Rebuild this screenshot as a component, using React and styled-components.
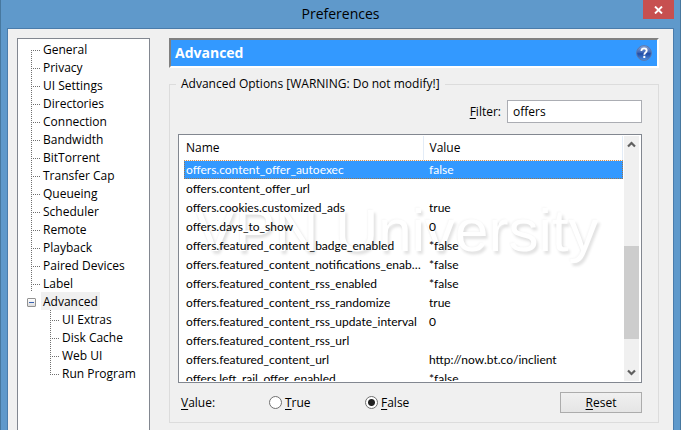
import React, { useState } from "react";
import styled, { createGlobalStyle } from "styled-components";

const sections = [
  "General",
  "Privacy",
  "UI Settings",
  "Directories",
  "Connection",
  "Bandwidth",
  "BitTorrent",
  "Transfer Cap",
  "Queueing",
  "Scheduler",
  "Remote",
  "Playback",
  "Paired Devices",
  "Label",
];

const advancedSections = ["UI Extras", "Disk Cache", "Web UI", "Run Program"];

const options = [
  { name: "offers.content_offer_autoexec", value: "false" },
  { name: "offers.content_offer_url", value: "" },
  { name: "offers.cookies.customized_ads", value: "true" },
  { name: "offers.days_to_show", value: "0" },
  { name: "offers.featured_content_badge_enabled", value: "*false" },
  { name: "offers.featured_content_notifications_enabled", value: "*false" },
  { name: "offers.featured_content_rss_enabled", value: "*false" },
  { name: "offers.featured_content_rss_randomize", value: "true" },
  { name: "offers.featured_content_rss_update_interval", value: "0" },
  { name: "offers.featured_content_rss_url", value: "" },
  { name: "offers.featured_content_url", value: "http://now.bt.co/inclient" },
  { name: "offers.left_rail_offer_enabled", value: "*false" },
];

const HelpIcon = () => (
  <svg width="16" height="16" viewBox="0 0 16 16" aria-hidden="true">
    <defs>
      <linearGradient id="helpFill" x1="0" y1="0" x2="0" y2="1">
        <stop offset="0" stopColor="#8fa9d8" />
        <stop offset="0.45" stopColor="#4068b8" />
        <stop offset="0.55" stopColor="#1f4ba6" />
        <stop offset="1" stopColor="#4f8fe0" />
      </linearGradient>
    </defs>
    <circle cx="8" cy="8" r="7.4" fill="url(#helpFill)" stroke="#5b78ad" />
    <path
      d="M5.4 6C5.4 4.2 6.5 3.3 8.1 3.3s2.6 1 2.6 2.4c0 1.8-2.4 1.9-2.4 4"
      fill="none"
      stroke="#fff"
      strokeWidth="1.8"
    />
    <rect x="7.3" y="10.8" width="2" height="2.2" fill="#fff" />
  </svg>
);

const Chevron = ({ down }) => (
  <svg width="9" height="7" viewBox="0 0 9 7" aria-hidden="true">
    <path
      d={down ? "M1 1.5l3.5 3.5L8 1.5" : "M1 5.5L4.5 2 8 5.5"}
      fill="none"
      stroke="#606060"
      strokeWidth="2.2"
    />
  </svg>
);

const App = () => {
  const [section, setSection] = useState("Advanced");
  const [filter, setFilter] = useState("offers");
  const [selected, setSelected] = useState(0);
  const [value, setValue] = useState("false");

  const renderItem = (label, first, last) => (
    <TreeRow key={label} role="treeitem" aria-selected={section === label}>
      <Branch $first={first} $last={last} />
      <TreeLabel $active={section === label} onClick={() => setSection(label)}>
        {label}
      </TreeLabel>
    </TreeRow>
  );

  return (
    <>
      <GlobalStyle />
      <Window>
        <TitleBar>
          <Title>Preferences</Title>
          <CloseButton type="button" aria-label="Close">
            <svg width="9" height="8" viewBox="0 0 9 8" aria-hidden="true">
              <path
                d="M1 0.5l7 7M8 0.5l-7 7"
                stroke="#fff"
                strokeWidth="1.9"
              />
            </svg>
          </CloseButton>
        </TitleBar>
        <Body>
          <Tree role="tree" aria-label="Sections">
            {sections.map((label, i) => renderItem(label, i === 0))}
            <TreeRow role="treeitem" aria-expanded="true">
              <Toggle type="button" aria-label="Collapse Advanced" />
              <TreeLabel
                $active={section === "Advanced"}
                onClick={() => setSection("Advanced")}
              >
                Advanced
              </TreeLabel>
            </TreeRow>
            <SubTree role="group">
              {advancedSections.map((label, i) =>
                renderItem(label, false, i === advancedSections.length - 1)
              )}
            </SubTree>
          </Tree>

          <Page>
            <Banner>
              <h1>Advanced</h1>
              <HelpButton type="button" aria-label="Help">
                <HelpIcon />
              </HelpButton>
            </Banner>

            <Group>
              <legend>Advanced Options [WARNING: Do not modify!]</legend>
              <GroupBody>
                <FilterRow>
                  <label htmlFor="filter">
                    <u>F</u>ilter:
                  </label>
                  <FilterInput
                    id="filter"
                    type="text"
                    value={filter}
                    onChange={(e) => setFilter(e.target.value)}
                  />
                </FilterRow>

                <ListBox>
                  <Watermark>VPN University</Watermark>
                  <ListView>
                    <Table>
                      <colgroup>
                        <col className="name" />
                        <col />
                      </colgroup>
                      <thead>
                        <tr>
                          <th>Name</th>
                          <th>Value</th>
                        </tr>
                      </thead>
                      <tbody>
                        {options.map((option, i) => (
                          <OptionRow
                            key={option.name}
                            $selected={selected === i}
                            onClick={() => setSelected(i)}
                          >
                            <td>{option.name}</td>
                            <td>{option.value}</td>
                          </OptionRow>
                        ))}
                      </tbody>
                    </Table>
                  </ListView>
                  <ScrollBar>
                    <ScrollButton type="button" aria-label="Scroll up">
                      <Chevron />
                    </ScrollButton>
                    <Track>
                      <Thumb />
                    </Track>
                    <ScrollButton type="button" aria-label="Scroll down">
                      <Chevron down />
                    </ScrollButton>
                  </ScrollBar>
                </ListBox>

                <ValueRow>
                  <ValueLabel>
                    <u>V</u>alue:
                  </ValueLabel>
                  <RadioLabel>
                    <Radio
                      name="value"
                      checked={value === "true"}
                      onChange={() => setValue("true")}
                    />
                    <span>
                      <u>T</u>rue
                    </span>
                  </RadioLabel>
                  <RadioLabel>
                    <Radio
                      name="value"
                      checked={value === "false"}
                      onChange={() => setValue("false")}
                    />
                    <span>
                      <u>F</u>alse
                    </span>
                  </RadioLabel>
                  <ResetButton type="button">
                    <u>R</u>eset
                  </ResetButton>
                </ValueRow>
              </GroupBody>
            </Group>
          </Page>
        </Body>
      </Window>
    </>
  );
};

export default App;

const GlobalStyle = createGlobalStyle`
  * {
    box-sizing: border-box;
  }

  body {
    margin: 0;
    color: #000;
    font-family: "Open Sans", "Noto Sans", sans-serif;
    font-size: 12px;
    line-height: 18px;
  }

  button,
  input {
    margin: 0;
    padding: 0;
    color: inherit;
    font: inherit;
  }

  u {
    text-underline-offset: 2px;
  }
`;

const Window = styled.div`
  display: flex;
  flex-direction: column;
  height: 100vh;
  padding: 0 6px;
  background-color: #5f99cb;
  border-left: 1px solid #47789f;
  border-right: 1px solid #47789f;
`;

const TitleBar = styled.div`
  display: grid;
  grid-template-columns: 1fr auto 1fr;
  flex: none;
  height: 28px;
`;

const Title = styled.div`
  grid-column: 2;
  font-size: 14px;
  line-height: 28px;
`;

const CloseButton = styled.button`
  display: flex;
  justify-content: center;
  align-items: center;
  justify-self: end;
  width: 31px;
  height: 19px;
  background-color: #c75050;
  border: none;
`;

const Body = styled.div`
  display: flex;
  flex: 1;
  gap: 19px;
  min-height: 0;
  padding: 9px 14px 0 9px;
  background-color: #f0f0f0;
  border: 1px solid #4a7cab;
  border-bottom: none;
`;

const Tree = styled.ul`
  flex: none;
  width: 133px;
  margin: 0;
  padding: 1px 0 0 13px;
  list-style: none;
  background-color: #fff;
  border: 1px solid #828790;
  border-bottom: none;
`;

const SubTree = styled.ul`
  margin: 0;
  padding: 0 0 0 19px;
  list-style: none;
`;

const TreeRow = styled.li`
  display: flex;
  height: 18px;
`;

/* dotted connector: a vertical rail plus a stub towards the label */
const Branch = styled.span`
  flex: none;
  width: 10px;
  background-image: repeating-linear-gradient(
      to bottom,
      #707070 0 1px,
      transparent 1px 2px
    ),
    repeating-linear-gradient(to right, #707070 0 1px, transparent 1px 2px);
  background-size: 1px ${(p) => (p.$first ? "8px" : p.$last ? "10px" : "18px")},
    9px 1px;
  background-position: 0 ${(p) => (p.$first ? "10px" : "0")}, 0 10px;
  background-repeat: no-repeat;
`;

const TreeLabel = styled.span`
  height: 18px;
  padding: 0 2px;
  line-height: 20px;
  background-color: ${(p) => (p.$active ? "#f0f0f0" : "transparent")};
  cursor: default;
`;

const Toggle = styled.button`
  flex: none;
  width: 9px;
  height: 9px;
  margin: 6px 5px 0 -4px;
  background: linear-gradient(#3a62b0, #3a62b0) center / 5px 1px no-repeat,
    linear-gradient(#fff, #dcdcdc);
  border: 1px solid #919191;
  border-radius: 1px;
`;

const Page = styled.div`
  display: flex;
  flex: 1;
  flex-direction: column;
  min-width: 0;
  padding-bottom: 7px;
`;

const Banner = styled.div`
  display: flex;
  justify-content: space-between;
  align-items: center;
  flex: none;
  height: 30px;
  padding: 0 5px 0 4px;
  background-color: #3399ff;
  border: 2px solid;
  border-color: #808080 #fff #fff #808080;

  h1 {
    margin: 0;
    color: #fff;
    font-size: 14px;
    line-height: 24px;
  }
`;

const HelpButton = styled.button`
  display: flex;
  background: none;
  border: none;
`;

const Group = styled.fieldset`
  display: flex;
  flex: 1;
  flex-direction: column;
  min-width: 0;
  min-height: 0;
  margin: 7px 0 0;
  padding: 0 16px 9px 8px;
  border: 1px solid #dcdcdc;

  legend {
    margin-left: -2px;
    padding: 0 5px;
  }
`;

const GroupBody = styled.div`
  display: flex;
  flex: 1;
  flex-direction: column;
  min-height: 0;
`;

const FilterRow = styled.div`
  display: flex;
  justify-content: flex-end;
  align-items: center;
  gap: 6px;
  margin: 7px 0 11px;
`;

const FilterInput = styled.input`
  width: 135px;
  height: 23px;
  padding: 0 5px;
  background-color: #fff;
  border: 1px solid #abadb3;
`;

const ListBox = styled.div`
  position: relative;
  display: flex;
  flex: 1;
  min-height: 0;
  padding: 1px;
  background-color: #fff;
  border: 1px solid #828790;
`;

const ListView = styled.div`
  position: relative;
  flex: 1;
  min-width: 0;
  padding-left: 4px;
  overflow: hidden;
`;

const Table = styled.table`
  width: 100%;
  table-layout: fixed;
  border-collapse: collapse;

  col.name {
    width: 239px;
  }

  th,
  td {
    padding: 0 6px;
    text-align: left;
    font-weight: normal;
    white-space: nowrap;
    overflow: hidden;
    text-overflow: ellipsis;
  }

  th {
    height: 24px;
    border-right: 1px solid #e3ecf7;
    border-bottom: 1px solid #eef2f8;
  }

  td {
    font-family: Lato, "Open Sans", sans-serif;
  }

  th:first-child,
  td:first-child {
    padding: 0 0 0 2px;
  }
`;

const OptionRow = styled.tr`
  height: 19px;
  color: ${(p) => (p.$selected ? "#fff" : "inherit")};
  background-color: ${(p) => (p.$selected ? "#3399ff" : "transparent")};
  outline: ${(p) =>
    p.$selected ? "1px dotted rgba(204, 102, 0, 0.7)" : "none"};
  outline-offset: -1px;
`;

const ScrollBar = styled.div`
  display: flex;
  flex: none;
  flex-direction: column;
  width: 17px;
  padding: 0 1px;
`;

const ScrollButton = styled.button`
  display: flex;
  justify-content: center;
  align-items: center;
  height: 17px;
  background-color: #f0f0f0;
  border: none;
`;

const Track = styled.div`
  display: flex;
  flex: 1;
  flex-direction: column;
  padding: 93px 0 25px;
  background-color: #f0f0f0;
`;

const Thumb = styled.div`
  flex: 1;
  background-color: #cdcdcd;
`;

const Watermark = styled.div`
  position: absolute;
  top: 62px;
  left: 16px;
  color: #fff;
  font-family: "Liberation Sans", sans-serif;
  font-size: 60px;
  line-height: 68px;
  white-space: nowrap;
  text-shadow: 2px 3px 3px rgba(0, 0, 0, 0.12),
    -1px -1px 2px rgba(0, 0, 0, 0.03);
  pointer-events: none;
`;

const ValueRow = styled.div`
  display: flex;
  align-items: center;
  flex: none;
  margin-top: 9px;
  padding-left: 3px;
`;

const ValueLabel = styled.span`
  width: 88px;
`;

const RadioLabel = styled.label`
  display: flex;
  align-items: center;
  gap: 3px;
  width: 96px;
`;

const Radio = styled.input.attrs({ type: "radio" })`
  appearance: none;
  width: 13px;
  height: 13px;
  background-color: #fff;
  border: 1px solid #707070;
  border-radius: 50%;

  &:checked {
    background-image: radial-gradient(circle, #222 0 3px, transparent 4px);
  }
`;

const ResetButton = styled.button`
  width: 82px;
  height: 21px;
  margin-left: auto;
  line-height: 19px;
  background: linear-gradient(#f0f0f0, #e5e5e5);
  border: 1px solid #acacac;
`;
